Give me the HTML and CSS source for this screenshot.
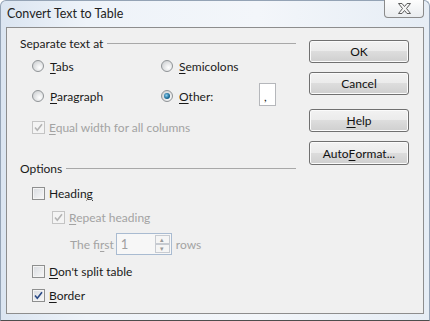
FILE: index.html
```html
<!DOCTYPE html>
<html lang="en">
<head>
    <meta charset="UTF-8">
    <title>Convert Text to Table</title>
    <link rel="stylesheet" href="styles.css">
</head>
<body>
    <div class="window">
        <div class="titlebar">
            <span class="title">Convert Text to Table</span>
            <div class="close">
                <svg width="13" height="11" viewBox="0 0 13 11">
                    <polygon points="0.5,0.5 4,0.5 6.5,3.5 9,0.5 12.5,0.5 8.5,5.5 12.5,10.5 9,10.5 6.5,7.5 4,10.5 0.5,10.5 4.5,5.5" fill="#f4f4f4" stroke="#5c5c5c" stroke-width="1"/>
                </svg>
            </div>
        </div>
        <div class="client">
            <div class="main">
                <div class="group-head">
                    <span>Separate text at</span>
                    <span class="rule"></span>
                </div>
                <div class="sep-grid">
                    <div class="opt"><span class="radio"></span><span class="lbl"><u>T</u>abs</span></div>
                    <div class="opt"><span class="radio"></span><span class="lbl"><u>S</u>emicolons</span></div>
                    <div></div>
                    <div class="opt"><span class="radio"></span><span class="lbl"><u>P</u>aragraph</span></div>
                    <div class="opt"><span class="radio on"></span><span class="lbl"><u>O</u>ther:</span></div>
                    <div class="sep-char"><span>,</span></div>
                    <div class="opt wide disabled">
                        <span class="check"><svg width="11" height="11" viewBox="0 0 11 11"><path d="M2 5.5 L4.3 8.2 L9 2.2" fill="none" stroke="#b4b4b4" stroke-width="1.6"/></svg></span>
                        <span class="lbl"><u>E</u>qual width for all columns</span>
                    </div>
                </div>

                <div class="group-head options-head">
                    <span>Options</span>
                    <span class="rule"></span>
                </div>
                <div class="opt row-heading">
                    <span class="check"></span><span class="lbl">Headin<u>g</u></span>
                </div>
                <div class="opt row-repeat disabled">
                    <span class="check"><svg width="11" height="11" viewBox="0 0 11 11"><path d="M2 5.5 L4.3 8.2 L9 2.2" fill="none" stroke="#b4b4b4" stroke-width="1.6"/></svg></span>
                    <span class="lbl"><u>R</u>epeat heading</span>
                </div>
                <div class="opt row-first disabled">
                    <span class="first-lbl">The fi<u>r</u>st</span>
                    <div class="spin">
                        <span class="spin-val">1</span>
                        <div class="spin-btns">
                            <span class="spin-btn">&#9652;</span>
                            <span class="spin-btn">&#9662;</span>
                        </div>
                    </div>
                    <span class="rows-lbl">rows</span>
                </div>
                <div class="opt row-split">
                    <span class="check"></span><span class="lbl"><u>D</u>on't split table</span>
                </div>
                <div class="opt row-border">
                    <span class="check"><svg width="11" height="11" viewBox="0 0 11 11"><path d="M2 5.5 L4.3 8.2 L9 2.2" fill="none" stroke="#2a4a86" stroke-width="1.6"/></svg></span>
                    <span class="lbl"><u>B</u>order</span>
                </div>
            </div>
            <div class="buttons">
                <div class="btn">OK</div>
                <div class="btn btn-cancel">Cancel</div>
                <div class="btn btn-help"><u>H</u>elp</div>
                <div class="btn btn-auto">Auto<u>F</u>ormat...</div>
            </div>
        </div>
    </div>
</body>
</html>
```

FILE: styles.css
```css
body {
    margin: 0;
    padding: 0;
    font-family: "Segoe UI", Lato, "Noto Sans", sans-serif;
    font-size: 12px;
    color: #1a1a1a;
}

u {
    text-decoration-thickness: 1px;
    text-underline-offset: 2px;
}

.window {
    width: 430px;
    height: 321px;
    box-sizing: border-box;
    display: flex;
    flex-direction: column;
    background: linear-gradient(to right, #dbe5f1, #eef3f9 20%, #f3f6fa 60%, #e6edf5);
    border: 1px solid #94a3b5;
    border-bottom-color: #4d4d4d;
    border-radius: 6px 6px 0 0;
}

.titlebar {
    height: 26px;
    display: flex;
    align-items: flex-start;
}

.title {
    padding: 5px 0 0 6px;
    font-size: 12.5px;
    color: #222;
}

.close {
    margin-left: auto;
    margin-right: 5px;
    margin-top: -1px;
    width: 40px;
    height: 18px;
    box-sizing: border-box;
    border: 1px solid #8a8a8a;
    border-top: none;
    border-radius: 0 0 4px 4px;
    background: linear-gradient(#fdfdfd, #e9ecef);
    display: flex;
    align-items: center;
    justify-content: center;
}

.client {
    flex: 1;
    margin: 0 5px 6px 5px;
    border: 1px solid #8d8d8d;
    background: #f0f0f0;
    display: flex;
    padding: 7px 13px 0 13px;
}

.main {
    width: 276px;
}

.group-head {
    height: 16px;
    display: flex;
    align-items: center;
}

.group-head .rule {
    flex: 1;
    height: 1px;
    margin-left: 4px;
    background: #a8a8a8;
}

.sep-grid {
    margin-left: 12px;
    display: grid;
    grid-template-columns: 129px 98px auto;
    grid-template-rows: 30px 30px 32px;
}

.opt {
    display: flex;
    align-items: center;
}

.opt.wide {
    grid-column: 1 / 4;
}

.disabled {
    color: #a3a3a3;
}

.radio {
    width: 12px;
    height: 12px;
    box-sizing: border-box;
    border-radius: 50%;
    border: 1px solid #8f9396;
    background: radial-gradient(circle at 65% 65%, #ffffff, #d6d8da 70%);
    margin-right: 6px;
    position: relative;
}

.radio.on::after {
    content: "";
    position: absolute;
    left: 2px;
    top: 2px;
    width: 6px;
    height: 6px;
    border-radius: 50%;
    background: radial-gradient(circle at 40% 40%, #8fd0f0, #1d6e9a 55%, #0d3d5c);
}

.check {
    width: 13px;
    height: 13px;
    box-sizing: border-box;
    border: 1px solid #8e8f8f;
    background: linear-gradient(135deg, #d8dbe0, #f8f8f8);
    box-shadow: inset 0 0 0 1px #f4f4f4;
    margin-right: 4px;
    display: flex;
    align-items: center;
    justify-content: center;
}

.disabled .check {
    border-color: #c4c4c4;
    background: #f4f4f4;
}

.sep-char {
    width: 17px;
    height: 23px;
    box-sizing: border-box;
    margin-top: -3px;
    border: 1px solid #b5b7bb;
    background: #fff;
    padding: 7px 0 0 4px;
    align-self: center;
    line-height: 12px;
}

.options-head {
    margin-top: 17px;
}

.row-heading {
    margin-top: 5px;
    margin-left: 12px;
    height: 24px;
}

.row-repeat {
    margin-left: 32px;
    height: 24px;
}

.row-first {
    margin-left: 50px;
    height: 30px;
}

.spin {
    margin-left: 2px;
    width: 56px;
    height: 22px;
    box-sizing: border-box;
    border: 1px solid #a9bbd1;
    background: #f7f7f7;
    display: flex;
    align-items: center;
    padding: 1px 1px 1px 4px;
}

.spin-val {
    flex: 1;
    color: #a0a0a0;
    font-size: 13px;
}

.spin-btns {
    width: 15px;
    height: 18px;
    display: flex;
    flex-direction: column;
}

.spin-btn {
    flex: 1;
    border: 1px solid #c7cbd1;
    background: #f5f5f5;
    font-size: 7px;
    line-height: 7px;
    text-align: center;
    color: #9a9a9a;
}

.rows-lbl {
    margin-left: 4px;
}

.row-split {
    margin-left: 12px;
    height: 24px;
}

.row-border {
    margin-left: 12px;
    height: 25px;
}

.buttons {
    margin-left: 13px;
    margin-top: 5px;
    width: 100px;
    display: flex;
    flex-direction: column;
}

.btn {
    height: 23px;
    box-sizing: border-box;
    border: 1px solid #707070;
    border-radius: 3px;
    background: linear-gradient(#f2f2f2 0%, #ebebeb 49%, #dddddd 50%, #cfcfcf 100%);
    box-shadow: inset 0 0 0 1px #fbfbfb;
    display: flex;
    align-items: center;
    justify-content: center;
    color: #111;
}

.btn-cancel {
    margin-top: 9px;
}

.btn-help {
    margin-top: 14px;
}

.btn-auto {
    margin-top: 9px;
    height: 24px;
}
```
